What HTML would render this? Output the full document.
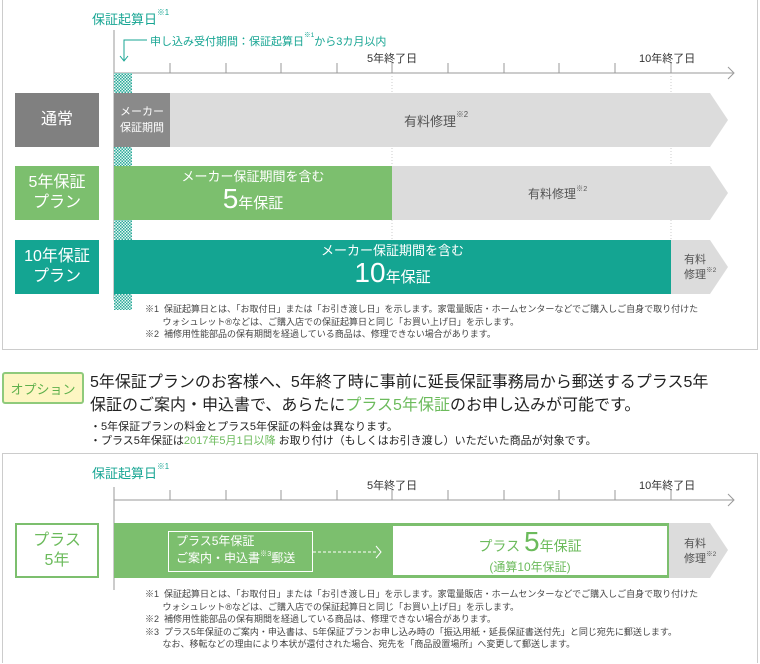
<!DOCTYPE html>
<html><head><meta charset="utf-8"><style>
*{margin:0;padding:0;box-sizing:border-box}
body{width:760px;height:664px;background:#fff;position:relative;overflow:hidden;font-family:"Liberation Sans","Noto Sans CJK JP",sans-serif;color:#333}
.a{position:absolute;white-space:nowrap}
.teal{color:#17a593}
.note{font-size:9px;line-height:12.5px;color:#444}
sup{font-size:60%;vertical-align:top;line-height:1}
.lbl{position:absolute;display:flex;align-items:center;justify-content:center;text-align:center;font-size:16px;line-height:20px;color:#fff}
</style></head><body>
<div class="a" style="left:2px;top:0;width:756px;height:350px;border:1px solid #ccc;border-top:none"></div>
<div class="a" style="left:2px;top:453px;width:756px;height:210px;border:1px solid #ccc;border-bottom:none"></div>
<svg class="a" style="left:0;top:0" width="760" height="664">
<defs><pattern id="ck" width="3" height="3" patternUnits="userSpaceOnUse"><rect width="3" height="3" fill="#e8f6f3"/><rect width="1.5" height="1.5" fill="#2aa99a"/><rect x="1.5" y="1.5" width="1.5" height="1.5" fill="#2aa99a"/></pattern></defs>
<line x1="114" y1="30" x2="114" y2="300" stroke="#999"/>
<line x1="114" y1="73" x2="733" y2="73" stroke="#999"/>
<polyline points="728,67 734,73 728,79" fill="none" stroke="#999"/>
<g stroke="#999"><line x1="170" y1="63" x2="170" y2="73"/><line x1="226" y1="63" x2="226" y2="73"/><line x1="281" y1="63" x2="281" y2="73"/><line x1="337" y1="63" x2="337" y2="73"/><line x1="392" y1="63" x2="392" y2="73"/><line x1="448" y1="63" x2="448" y2="73"/><line x1="504" y1="63" x2="504" y2="73"/><line x1="559" y1="63" x2="559" y2="73"/><line x1="615" y1="63" x2="615" y2="73"/><line x1="671" y1="63" x2="671" y2="73"/></g>
<line x1="392" y1="73" x2="392" y2="240" stroke="#ccc" stroke-dasharray="1,2"/>
<line x1="671" y1="73" x2="671" y2="240" stroke="#ccc" stroke-dasharray="1,2"/>
<rect x="114" y="73" width="18" height="237" fill="url(#ck)"/>
<polyline points="147,40 124,40 124,60" fill="none" stroke="#17a593"/>
<polyline points="120,56 124,61 128,56" fill="none" stroke="#17a593"/>
<rect x="15" y="93" width="84" height="54" fill="#808080"/>
<polygon points="114,93 710,93 728,120 710,147 114,147" fill="#dcdcdc"/>
<rect x="114" y="93" width="56" height="54" fill="#8a8a8a"/>
<rect x="15" y="166" width="84" height="54" fill="#7cbf6e"/>
<polygon points="114,166 710,166 728,193 710,220 114,220" fill="#dcdcdc"/>
<rect x="114" y="166" width="278" height="54" fill="#7cbf6e"/>
<rect x="15" y="240" width="84" height="54" fill="#14a592"/>
<polygon points="114,240 710,240 728,267 710,294 114,294" fill="#dcdcdc"/>
<rect x="114" y="240" width="557" height="54" fill="#14a592"/>
<line x1="114" y1="487" x2="114" y2="590" stroke="#999"/>
<line x1="114" y1="500" x2="733" y2="500" stroke="#999"/>
<polyline points="728,494 734,500 728,506" fill="none" stroke="#999"/>
<g stroke="#999"><line x1="170" y1="490" x2="170" y2="500"/><line x1="226" y1="490" x2="226" y2="500"/><line x1="281" y1="490" x2="281" y2="500"/><line x1="337" y1="490" x2="337" y2="500"/><line x1="392" y1="490" x2="392" y2="500"/><line x1="448" y1="490" x2="448" y2="500"/><line x1="504" y1="490" x2="504" y2="500"/><line x1="559" y1="490" x2="559" y2="500"/><line x1="615" y1="490" x2="615" y2="500"/><line x1="671" y1="490" x2="671" y2="500"/></g>
<rect x="16" y="524" width="82" height="53" fill="#fff" stroke="#7cbf6e" stroke-width="2"/>
<polygon points="669,523 710,523 728,550 710,578 669,578" fill="#dcdcdc"/>
<rect x="114" y="523" width="555" height="55" fill="#7cbf6e"/>
<rect x="393" y="526" width="274" height="49" fill="#fff"/>
<rect x="168.5" y="531.5" width="144" height="40" fill="none" stroke="#fff"/>
<line x1="313" y1="552" x2="378" y2="552" stroke="#fff" stroke-dasharray="3,2"/>
<polyline points="376,546 381,552 376,558" fill="none" stroke="#fff"/>
</svg>
<div class="a teal" style="left:92px;top:9px;font-size:13px">保証起算日<sup>※1</sup></div>
<div class="a teal" style="left:150px;top:33px;font-size:11px">申し込み受付期間：保証起算日<sup>※1</sup>から3カ月以内</div>
<div class="a" style="left:367px;top:50px;font-size:11px">5年終了日</div>
<div class="a" style="left:639px;top:50px;font-size:11px">10年終了日</div>
<div class="lbl" style="left:15px;top:93px;width:84px;height:54px">通常</div>
<div class="lbl" style="left:114px;top:93px;width:56px;height:54px;font-size:11px;line-height:16px">メーカー<br>保証期間</div>
<div class="a" style="left:404px;top:111px;font-size:13px;color:#555">有料修理<sup>※2</sup></div>
<div class="lbl" style="left:15px;top:166px;width:84px;height:54px">5年保証<br>プラン</div>
<div class="lbl" style="left:114px;top:166px;width:278px;height:54px;flex-direction:column;font-size:13px;line-height:17px">メーカー保証期間を含む<div style="line-height:28px"><span style="font-size:28px">5</span><span style="font-size:15px">年保証</span></div></div>
<div class="a" style="left:528px;top:185px;font-size:12px;color:#555">有料修理<sup>※2</sup></div>
<div class="lbl" style="left:15px;top:240px;width:84px;height:54px">10年保証<br>プラン</div>
<div class="lbl" style="left:114px;top:240px;width:557px;height:54px;flex-direction:column;font-size:13px;line-height:17px">メーカー保証期間を含む<div style="line-height:28px"><span style="font-size:28px">10</span><span style="font-size:15px">年保証</span></div></div>
<div class="a" style="left:684px;top:253px;font-size:11px;line-height:15px;color:#555">有料<br>修理<sup>※2</sup></div>
<div class="a note" style="left:145px;top:303px">※1&nbsp; 保証起算日とは、「お取付日」または「お引き渡し日」を示します。家電量販店・ホームセンターなどでご購入しご自身で取り付けた<br>&nbsp;&nbsp;&nbsp;&nbsp;&nbsp;&nbsp; ウォシュレット®などは、ご購入店での保証起算日と同じ「お買い上げ日」を示します。<br>※2&nbsp; 補修用性能部品の保有期間を経過している商品は、修理できない場合があります。</div>
<div class="a" style="left:2px;top:372px;width:82px;height:32px;background:#fdf6c3;border:2px solid #8fca7b;border-radius:3px;color:#5fb04c;font-size:13px;display:flex;align-items:center;justify-content:center">オプション</div>
<div class="a" style="left:90px;top:371px;font-size:16px;line-height:23px;color:#222">5年保証プランのお客様へ、5年終了時に事前に延長保証事務局から郵送するプラス5年<br>保証のご案内・申込書で、あらたに<span style="color:#6cbb5c">プラス5年保証</span>のお申し込みが可能です。</div>
<div class="a" style="left:90px;top:420px;font-size:11px;line-height:14px;color:#222">・5年保証プランの料金とプラス5年保証の料金は異なります。<br>・プラス5年保証は<span style="color:#6cbb5c">2017年5月1日以降</span> お取り付け（もしくはお引き渡し）いただいた商品が対象です。</div>
<div class="a teal" style="left:92px;top:463px;font-size:13px">保証起算日<sup>※1</sup></div>
<div class="a" style="left:367px;top:477px;font-size:11px">5年終了日</div>
<div class="a" style="left:639px;top:477px;font-size:11px">10年終了日</div>
<div class="lbl" style="left:15px;top:523px;width:84px;height:55px;color:#6cbb5c">プラス<br>5年</div>
<div class="a" style="left:176px;top:533px;font-size:12px;line-height:17px;color:#fff">プラス5年保証<br>ご案内・申込書<sup>※3</sup>郵送</div>
<div class="lbl" style="left:393px;top:526px;width:274px;height:49px;flex-direction:column;color:#6cbb5c;font-size:14px;line-height:18px"><div style="line-height:28px">プラス <span style="font-size:28px">5</span>年保証</div><div style="font-size:12px;line-height:14px">(通算10年保証)</div></div>
<div class="a" style="left:684px;top:537px;font-size:11px;line-height:15px;color:#555">有料<br>修理<sup>※2</sup></div>
<div class="a note" style="left:145px;top:588px">※1&nbsp; 保証起算日とは、「お取付日」または「お引き渡し日」を示します。家電量販店・ホームセンターなどでご購入しご自身で取り付けた<br>&nbsp;&nbsp;&nbsp;&nbsp;&nbsp;&nbsp; ウォシュレット®などは、ご購入店での保証起算日と同じ「お買い上げ日」を示します。<br>※2&nbsp; 補修用性能部品の保有期間を経過している商品は、修理できない場合があります。<br>※3&nbsp; プラス5年保証のご案内・申込書は、5年保証プランお申し込み時の「振込用紙・延長保証書送付先」と同じ宛先に郵送します。<br>&nbsp;&nbsp;&nbsp;&nbsp;&nbsp;&nbsp; なお、移転などの理由により本状が還付された場合、宛先を「商品設置場所」へ変更して郵送します。</div>
</body></html>
